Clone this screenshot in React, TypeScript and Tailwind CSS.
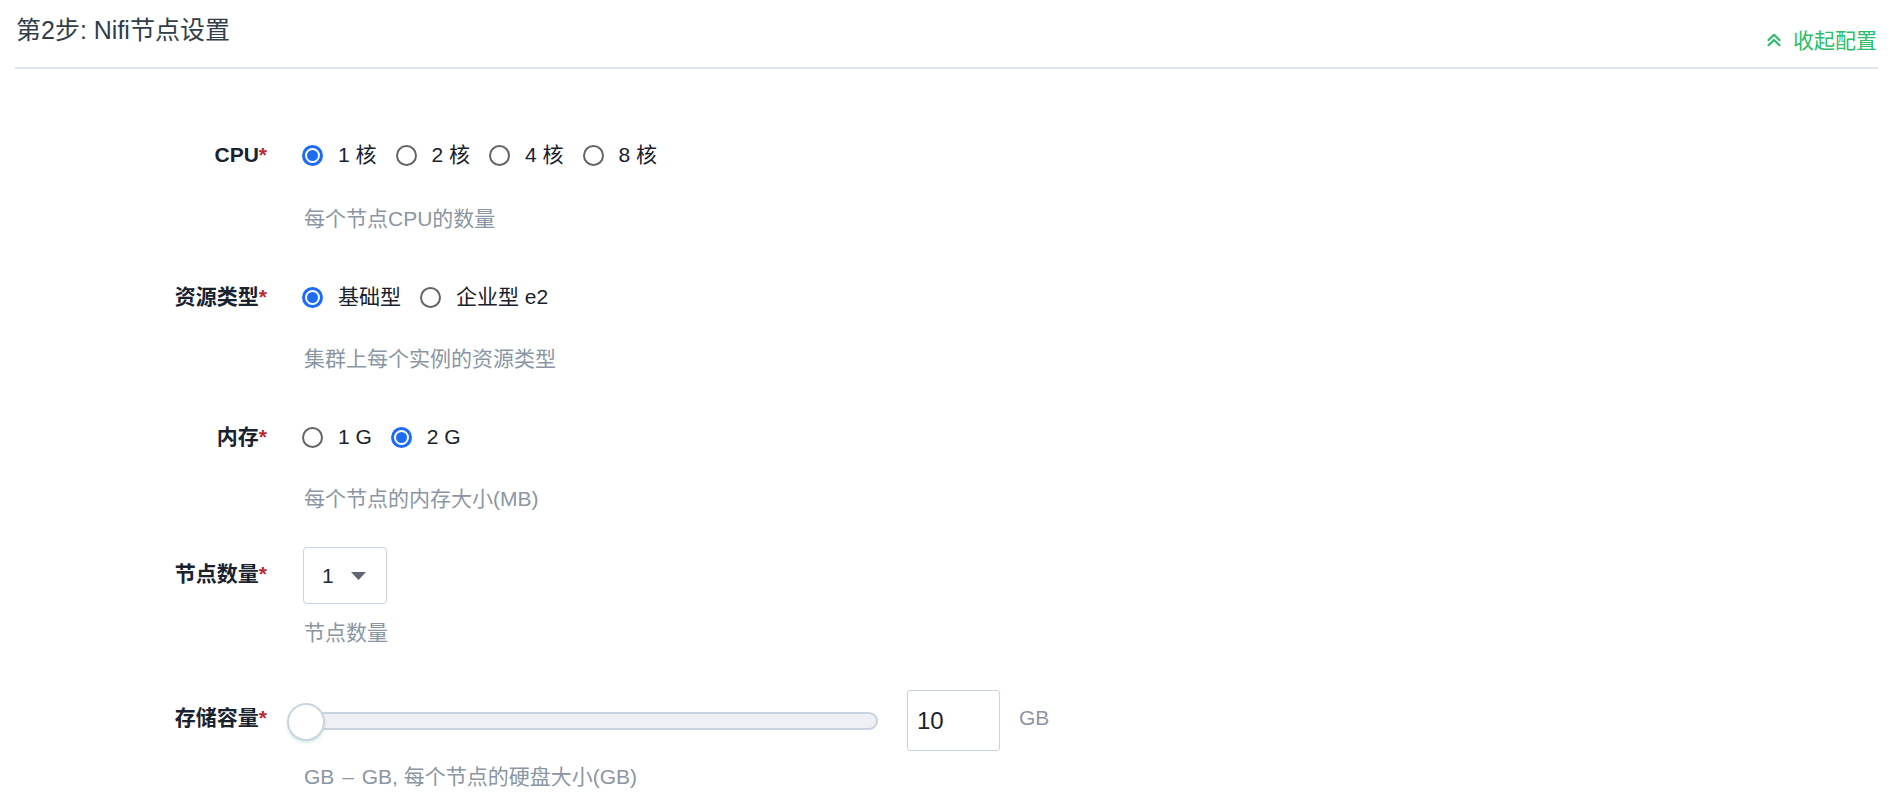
import React from "react";

const FONT = '"Liberation Sans", "Noto Sans CJK SC", sans-serif';

function Radio({ checked }: { checked: boolean }) {
  if (checked) {
    return (
      <span className="w-[21px] h-[21px] rounded-full border-[3px] border-[#1e6bf6] flex items-center justify-center shrink-0 bg-white">
        <span className="w-[11px] h-[11px] rounded-full bg-[#1e6bf6]" />
      </span>
    );
  }
  return <span className="w-[21px] h-[21px] rounded-full border-2 border-[#646464] shrink-0 bg-white" />;
}

function RadioGroup({ options, value }: { options: string[]; value: number }) {
  return (
    <div className="flex items-center">
      {options.map((o, i) => (
        <div key={o} className="flex items-center mr-[19px]">
          <Radio checked={i === value} />
          <span className="ml-[15px] text-[21px] leading-[30px] text-[#18212c] whitespace-pre">{o}</span>
        </div>
      ))}
    </div>
  );
}

function Label({ text, extra = "" }: { text: string; extra?: string }) {
  return (
    <div className={"w-[267px] shrink-0 text-right text-[21px] leading-[30px] font-bold text-[#19222e] " + extra}>
      {text}
      <span className="text-[#c0272d]">*</span>
    </div>
  );
}

function Help({ children, mt }: { children: React.ReactNode; mt: string }) {
  return (
    <div className={"ml-[304px] text-[21px] leading-[30px] text-[#8a96a4] whitespace-pre " + mt}>{children}</div>
  );
}

export default function App() {
  return (
    <div className="w-[1894px] h-[812px] bg-white overflow-hidden" style={{ fontFamily: FONT }}>
      <div className="px-[15px] pr-[16px]">
        <div className="flex justify-between items-start h-[69px] border-b-2 border-[#dfe6ee]">
          <div className="pt-[13px] pl-[1px] text-[25px] leading-[34px] text-[#323d4a]">第2步: Nifi节点设置</div>
          <div className="pt-[28px] flex items-center text-[21px] leading-[26px] text-[#2dbd6c]">
            <svg width="16" height="14" viewBox="0 0 16 14" fill="none" stroke="#2dbd6c" strokeWidth="2.2" strokeLinecap="round" strokeLinejoin="round" className="mr-[11px] -mt-[2px]">
              <polyline points="2.5,7 8,1.8 13.5,7" />
              <polyline points="2.5,12.2 8,7 13.5,12.2" />
            </svg>
            <span className="pr-[1px]">收起配置</span>
          </div>
        </div>
      </div>

      {/* CPU */}
      <div className="mt-[71px] flex items-center h-[30px]">
        <Label text="CPU" />
        <div className="ml-[35px]">
          <RadioGroup options={["1 核", "2 核", "4 核", "8 核"]} value={0} />
        </div>
      </div>
      <Help mt="mt-[34px]">每个节点CPU的数量</Help>

      {/* 资源类型 */}
      <div className="mt-[48px] flex items-center h-[30px]">
        <Label text="资源类型" />
        <div className="ml-[35px]">
          <RadioGroup options={["基础型", "企业型 e2"]} value={0} />
        </div>
      </div>
      <Help mt="mt-[32px]">集群上每个实例的资源类型</Help>

      {/* 内存 */}
      <div className="mt-[48px] flex items-center h-[30px]">
        <Label text="内存" />
        <div className="ml-[35px]">
          <RadioGroup options={["1 G", "2 G"]} value={1} />
        </div>
      </div>
      <Help mt="mt-[32px]">每个节点的内存大小(MB)</Help>

      {/* 节点数量 */}
      <div className="mt-[33px] flex items-center h-[57px]">
        <Label text="节点数量" extra="mb-[4px]" />
        <div className="ml-[36px] w-[84px] h-[57px] border-[1.5px] border-[#c8d3df] rounded-[4px] flex items-center pl-[18px]">
          <span className="text-[21px] leading-[30px] text-[#1f2733]">1</span>
          <svg width="15" height="8" viewBox="0 0 15 8" className="ml-[17px] mt-[1px]">
            <polygon points="0,0 15,0 7.5,8" fill="#5d6671" />
          </svg>
        </div>
      </div>
      <Help mt="mt-[14px]">节点数量</Help>

      {/* 存储容量 */}
      <div className="mt-[42px] flex items-center h-[61px]">
        <Label text="存储容量" extra="mb-[6px]" />
        <div className="ml-[20px] flex items-center">
          <div className="relative w-[591px] h-[38px] flex items-center">
            <div className="ml-[13px] flex-1 h-[18px] rounded-full bg-[#eef0f6] border-2 border-[#c9d3df]" />
            <div className="absolute left-0 top-[1px] w-[38px] h-[38px] rounded-full bg-white border-2 border-[#c9d4e0] shadow-[0_2px_3px_rgba(80,190,130,0.25)]" />
          </div>
          <div className="ml-[29px] w-[93px] h-[61px] border-[1.5px] border-[#c8d3df] rounded-[3px] flex items-center pl-[9px]">
            <span className="text-[24px] leading-[30px] text-[#1a2430]">10</span>
          </div>
          <span className="ml-[19px] mb-[6px] text-[21px] leading-[30px] text-[#8a96a4]">GB</span>
        </div>
      </div>
      <Help mt="mt-[11px]">
        GB<span className="mx-[2px]"> – </span>GB, 每个节点的硬盘大小(GB)
      </Help>
    </div>
  );
}
